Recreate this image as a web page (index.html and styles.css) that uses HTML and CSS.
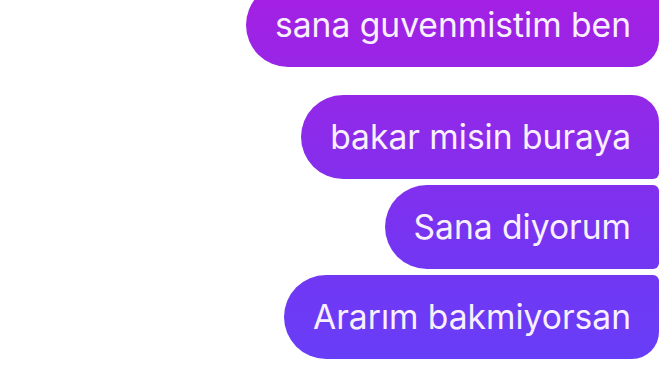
FILE: index.html
```html
<!DOCTYPE html>
<html lang="tr">
<head>
<meta charset="utf-8">
<title>Chat</title>
<link rel="stylesheet" href="styles.css">
</head>
<body>
<div class="thread">
  <div class="group">
    <div class="bubble single">sana guvenmistim ben</div>
  </div>
  <div class="group">
    <div class="bubble first">bakar misin buraya</div>
    <div class="bubble middle">Sana diyorum</div>
    <div class="bubble last">Ararım bakmiyorsan</div>
  </div>
</div>
</body>
</html>
```

FILE: styles.css
```css
html, body {
  margin: 0;
  padding: 0;
  background: #ffffff;
  overflow: hidden;
}

body {
  width: 672px;
  height: 378px;
  font-family: Inter, "Noto Sans", sans-serif;
}

.thread {
  display: flex;
  flex-direction: column;
  align-items: flex-end;
  gap: 28px;
  padding-right: 13px;
  margin-top: -17px;
}

.group {
  display: flex;
  flex-direction: column;
  align-items: flex-end;
  gap: 6px;
}

.bubble {
  box-sizing: border-box;
  height: 84px;
  display: flex;
  align-items: center;
  padding: 0 28px 1px 29px;
  font-size: 33.6px;
  letter-spacing: 0;
  color: #f8f0ff;
  white-space: nowrap;
  background: linear-gradient(to bottom, #a320e3 0px, #8d2bea 130px, #7435f2 250px, #663ff8 378px);
  background-attachment: fixed;
  border-radius: 42px 6px 6px 42px;
}

.bubble.single {
  border-radius: 42px 6px 27px 42px;
}

.bubble.first {
  border-radius: 42px 27px 6px 42px;
}

.bubble.middle {
  border-radius: 42px 6px 6px 42px;
}

.bubble.last {
  border-radius: 42px 6px 27px 42px;
}
```
